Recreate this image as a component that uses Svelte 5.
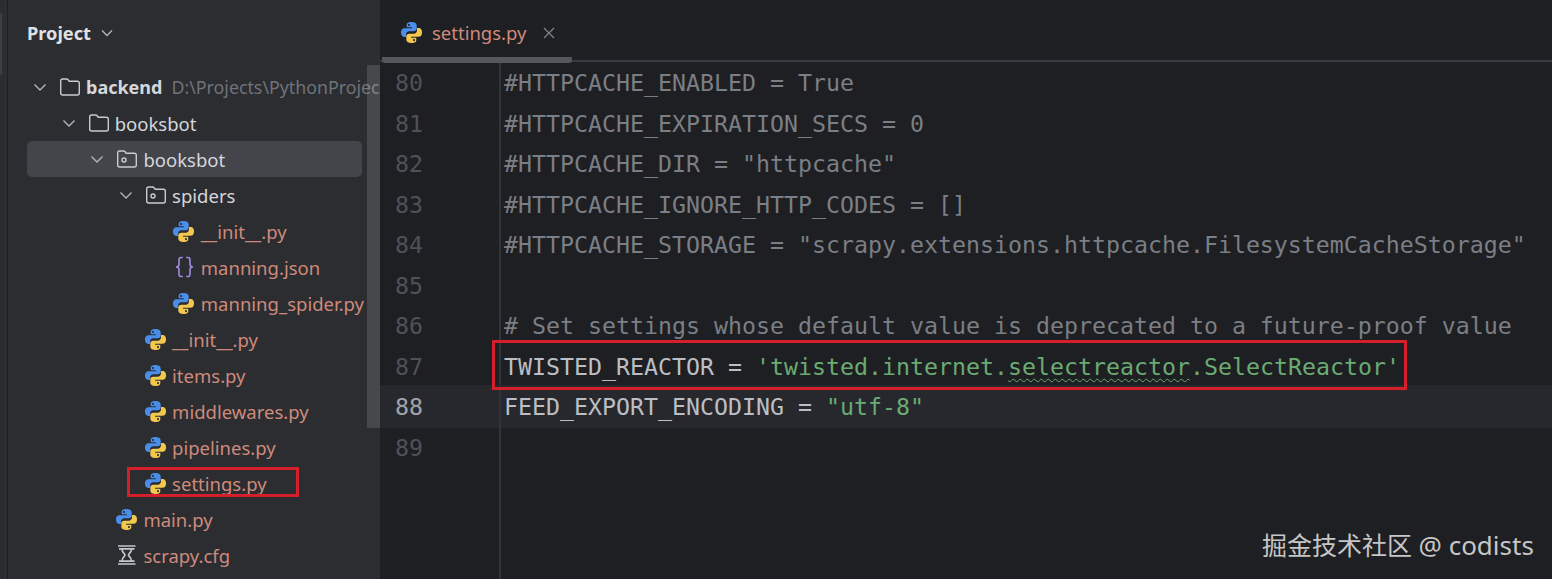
<script lang="ts">
  const tree = [
    { name: "backend", hint: "D:\\Projects\\PythonProjec", depth: 0, icon: "folder", open: true, strong: true },
    { name: "booksbot", depth: 1, icon: "folder", open: true },
    { name: "booksbot", depth: 2, icon: "package", open: true, selected: true },
    { name: "spiders", depth: 3, icon: "package", open: true },
    { name: "__init__.py", depth: 4, icon: "py", vcs: true },
    { name: "manning.json", depth: 4, icon: "json", vcs: true },
    { name: "manning_spider.py", depth: 4, icon: "py", vcs: true },
    { name: "__init__.py", depth: 3, icon: "py", vcs: true },
    { name: "items.py", depth: 3, icon: "py", vcs: true },
    { name: "middlewares.py", depth: 3, icon: "py", vcs: true },
    { name: "pipelines.py", depth: 3, icon: "py", vcs: true },
    { name: "settings.py", depth: 3, icon: "py", vcs: true },
    { name: "main.py", depth: 2, icon: "py", vcs: true },
    { name: "scrapy.cfg", depth: 2, icon: "cfg", vcs: true }
  ];

  const code = [
    { n: 80, text: "#HTTPCACHE_ENABLED = True", kind: "comment" },
    { n: 81, text: "#HTTPCACHE_EXPIRATION_SECS = 0", kind: "comment" },
    { n: 82, text: "#HTTPCACHE_DIR = \"httpcache\"", kind: "comment" },
    { n: 83, text: "#HTTPCACHE_IGNORE_HTTP_CODES = []", kind: "comment" },
    { n: 84, text: "#HTTPCACHE_STORAGE = \"scrapy.extensions.httpcache.FilesystemCacheStorage\"", kind: "comment" },
    { n: 85, text: "", kind: "comment" },
    { n: 86, text: "# Set settings whose default value is deprecated to a future-proof value", kind: "comment" },
    { n: 87, text: "", kind: "reactor" },
    { n: 88, text: "", kind: "encoding" },
    { n: 89, text: "", kind: "comment" }
  ];
</script>

{#snippet python()}
  <svg class="ico" width="23" height="23" viewBox="0 0 24 24">
    <path fill="#4a8eea" fill-rule="evenodd" d="M12 1C8.2 1 7 2.4 7 4.2V6.6h5.4v1H4.6C2.4 7.6 1 9.4 1 12.1c0 2.8 1.4 4.5 3.3 4.5h2V14c0-1.9 1.5-3.3 3.3-3.3h4.9c1.6 0 2.9-1.2 2.9-2.8V4.2C17.1 2.3 15.2 1 12 1zM9.4 3a1.1 1.1 0 1 1 0 2.2 1.1 1.1 0 0 1 0-2.2z" />
    <path fill="#f2c84f" fill-rule="evenodd" transform="rotate(180 12 12)" d="M12 1C8.2 1 7 2.4 7 4.2V6.6h5.4v1H4.6C2.4 7.6 1 9.4 1 12.1c0 2.8 1.4 4.5 3.3 4.5h2V14c0-1.9 1.5-3.3 3.3-3.3h4.9c1.6 0 2.9-1.2 2.9-2.8V4.2C17.1 2.3 15.2 1 12 1zM9.4 3a1.1 1.1 0 1 1 0 2.2 1.1 1.1 0 0 1 0-2.2z" />
  </svg>
{/snippet}

{#snippet icon(kind)}
  {#if kind === "py"}
    {@render python()}
  {:else if kind === "json"}
    <svg class="ico" width="22" height="22" viewBox="0 0 22 22" fill="none" stroke="#a08be0" stroke-width="1.6">
      <path d="M8.8 1.5H7.2C5.6 1.500 5 2.400 5 3.800V8.500C5 10 4 10.700 2.200 11 4 11.300 5 12 5 13.500V18.200C5 19.600 5.600 20.500 7.200 20.500H8.800" />
      <path d="M12.2 1.500H13.800C15.400 1.500 16 2.400 16 3.800V8.500C16 10 17 10.700 18.800 11 17 11.300 16 12 16 13.500V18.200C16 19.600 15.400 20.500 13.800 20.500H12.200" />
    </svg>
  {:else if kind === "cfg"}
    <svg class="ico" width="22" height="22" viewBox="0 0 22 22" fill="none" stroke="#c4c6cc" stroke-width="1.7">
      <path d="M2 2H19.500M3 4.800H18.500M2 20H19.500M3 17.200H18.500" />
      <path d="M6 5C6 9 9 9.500 9 11S6 13 6 17M15.500 5C15.500 9 12.500 9.500 12.500 11S15.500 13 15.500 17" />
    </svg>
  {:else}
    <svg class="ico" width="22" height="22" viewBox="0 0 22 22" fill="none" stroke="#c9cbd1" stroke-width="1.4">
      <path d="M1.700 5C1.700 3.800 2.500 3 3.700 3H7.500C8.200 3 8.700 3.300 9.100 3.800L10.200 5.300H18.300C19.500 5.300 20.300 6.100 20.300 7.300V17C20.300 18.200 19.500 19 18.300 19H3.700C2.500 19 1.700 18.200 1.700 17Z" />
      {#if kind === "package"}
        <circle cx="8" cy="12" r="2" />
      {/if}
    </svg>
  {/if}
{/snippet}

<div class="window">
  <div class="strip"><div class="strip-mark"></div></div>

  <aside class="sidebar">
    <header class="sidebar-head">
      <span>Project</span>
      <svg width="14" height="14" viewBox="0 0 14 14" fill="none" stroke="#b4b8bf" stroke-width="1.3">
        <path d="M2 4.500L7 9.500L12 4.500" />
      </svg>
    </header>
    <div class="tree">
      {#each tree as item}
        <div class="row" class:selected={item.selected} style="padding-left: {item.depth * 28.7}px">
          <span class="chev">
            {#if item.open}
              <svg width="14" height="14" viewBox="0 0 14 14" fill="none" stroke="#b4b8bf" stroke-width="1.3">
                <path d="M1.500 4.500L7 10L12.500 4.500" />
              </svg>
            {/if}
          </span>
          <span class="icon-slot" class:py={item.icon === "py"}>{@render icon(item.icon)}</span>
          <span class="name" class:vcs={item.vcs} class:strong={item.strong}>{item.name}</span>
          {#if item.hint}<span class="hint">{item.hint}</span>{/if}
        </div>
      {/each}
    </div>
    <div class="scrollbar"></div>
    <div class="mark side-mark"></div>
  </aside>

  <main class="editor">
    <div class="tabs">
      <div class="tab">
        {@render python()}
        <span class="tab-name">settings.py</span>
        <svg width="14" height="14" viewBox="0 0 14 14" fill="none" stroke="#7f8289" stroke-width="1.3">
          <path d="M2 2L12 12M12 2L2 12" />
        </svg>
      </div>
    </div>
    <div class="lines">
      {#each code as line}
        <div class="line" class:current={line.n === 88}>
          <span class="num">{line.n}</span>
          <span class="src {line.kind}">
            {#if line.kind === "reactor"}
              TWISTED_REACTOR = <span class="str">'twisted.internet.<span class="typo">selectreactor</span>.SelectReactor'</span>
            {:else if line.kind === "encoding"}
              FEED_EXPORT_ENCODING = <span class="str">"utf-8"</span>
            {:else}
              {line.text}
            {/if}
          </span>
        </div>
      {/each}
      <div class="line filler"><span class="num"></span><span class="src"></span></div>
    </div>
  </main>

  <div class="mark code-mark"></div>
  <div class="watermark">掘金技术社区 <span class="latin">@ codists</span></div>
</div>

<style>
  :global(body) {
    margin: 0;
    background: #1e1f22;
  }
  .window {
    position: relative;
    display: flex;
    width: 1552px;
    height: 579px;
    overflow: hidden;
    font-family: "Noto Sans", "Open Sans", sans-serif;
  }
  .strip {
    width: 7px;
    flex: none;
    background: #2b2d30;
    border-right: 1px solid #1e1f22;
  }
  .strip-mark {
    width: 2px;
    height: 62px;
    margin-top: 13px;
    background: #3c3e43;
  }
  .sidebar {
    position: relative;
    width: 372px;
    flex: none;
    background: #2b2d30;
    overflow: hidden;
  }
  .sidebar-head {
    display: flex;
    align-items: center;
    gap: 9px;
    height: 66px;
    padding-left: 19px;
    color: #dfe1e5;
    font-size: 18.2px;
    font-weight: 700;
  }
  .tree {
    padding: 3px 0 0 19px;
  }
  .row {
    display: flex;
    align-items: center;
    width: 335px;
    height: 36px;
    box-sizing: border-box;
    border-radius: 5px;
    white-space: nowrap;
    color: #d5d7dc;
    font-size: 18.5px;
  }
  .row.selected {
    background: #43454a;
  }
  .chev {
    display: flex;
    flex: none;
    width: 27px;
    padding-left: 6px;
  }
  .icon-slot {
    display: flex;
    flex: none;
    width: 27px;
    margin-left: -1px;
  }
  .icon-slot.py {
    width: 28.5px;
    margin-left: -2.5px;
  }
  .ico {
    flex: none;
  }
  .name.strong {
    font-size: 18px;
    font-weight: 700;
  }
  .name.vcs {
    color: #cf8a7c;
  }
  .hint {
    margin-left: 9px;
    color: #6f737a;
    font-size: 17.8px;
  }
  .scrollbar {
    position: absolute;
    left: 359px;
    top: 65px;
    width: 13px;
    height: 363px;
    background: rgba(255, 255, 255, 0.13);
  }
  .editor {
    display: flex;
    flex: 1;
    flex-direction: column;
    min-width: 0;
    background: #1e1f22;
  }
  .tabs {
    display: flex;
    height: 62px;
    flex: none;
    box-sizing: border-box;
    border-bottom: 2px solid #393b40;
    padding-left: 2px;
  }
  .tab {
    display: flex;
    align-items: center;
    gap: 9px;
    width: 190px;
    height: 63px;
    box-sizing: border-box;
    padding: 8px 0 0 18px;
    border-bottom: 6px solid #55575c;
    border-radius: 0 0 3px 3px;
    color: #cf8a7c;
    font-size: 18.5px;
  }
  .tab svg:last-child {
    margin-left: 6px;
  }
  .lines {
    display: flex;
    flex: 1;
    flex-direction: column;
    padding-top: 1px;
  }
  .line {
    display: flex;
    height: 40.5px;
    flex: none;
    align-items: stretch;
    font-family: "DejaVu Sans Mono", monospace;
    font-size: 23.25px;
    line-height: 40px;
    white-space: pre;
    color: #bcbec4;
  }
  .line.current {
    background: #26282e;
    box-shadow: 0 -2px 0 #26282e;
  }
  .line.filler {
    flex: 1;
  }
  .num {
    width: 104px;
    flex: none;
    padding-left: 15px;
    border-right: 2px solid #313438;
    color: #4e5157;
    margin-right: 3px;
  }
  .current .num {
    color: #a1a3ab;
  }
  .comment {
    color: #7a7e85;
  }
  .str {
    color: #6aab73;
  }
  .typo {
    text-decoration: underline wavy #6aab73 1px;
    text-underline-offset: 3px;
  }
  .mark {
    position: absolute;
    box-sizing: border-box;
    border: 3px solid #d5202c;
    pointer-events: none;
  }
  .side-mark {
    left: 119px;
    top: 467px;
    width: 172px;
    height: 30px;
  }
  .code-mark {
    left: 492px;
    top: 340px;
    width: 915px;
    height: 50px;
  }
  .watermark {
    position: absolute;
    left: 1262px;
    top: 527px;
    white-space: nowrap;
    font-family: "Noto Sans", "Noto Sans CJK SC", sans-serif;
    font-size: 25px;
    line-height: 36px;
    color: #c6c6c6;
  }
  .latin {
    font-size: 26px;
  }
</style>
